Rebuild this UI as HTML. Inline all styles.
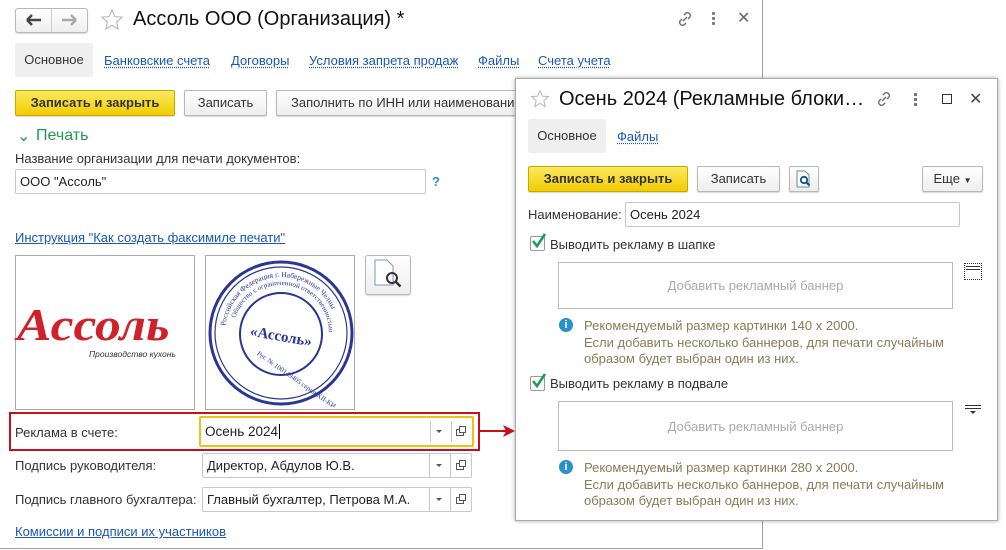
<!DOCTYPE html>
<html><head><meta charset="utf-8"><style>
*{box-sizing:border-box;margin:0;padding:0}
body{width:1006px;height:550px;background:#fff;position:relative;overflow:hidden;font-family:"Liberation Sans","Noto Sans CJK SC",sans-serif;font-size:13px;color:#333}
.a{position:absolute;white-space:nowrap}
.lnk{color:#1a56b8;text-decoration:underline dotted;text-underline-offset:2px}
.ul{color:#1a56b8;text-decoration:underline}
.btn{position:absolute;border:1px solid #b8b8b8;border-radius:2px;background:linear-gradient(#fff,#eee);box-shadow:0 1px 1px rgba(0,0,0,.15);text-align:center;color:#333}
.yb{background:linear-gradient(#fbe960,#f2cd00);border-color:#c9a800;font-weight:bold;color:#333}
.inp{position:absolute;border:1px solid #c8c8c8;border-radius:2px;background:#fff;padding-left:4px}
.dd{position:absolute;top:0;bottom:0;border-left:1px solid #c8c8c8;width:21px}
.tab{position:absolute;background:#efefef;border-radius:3px;text-align:center}
.info{position:absolute;width:14px;height:14px;border-radius:50%;background:#2b8fd0;color:#fff;font-size:11px;font-weight:bold;text-align:center;line-height:14px}
.note{color:#8b7b56;line-height:16.5px}
.cb{position:absolute;width:15px;height:15px;border:1px solid #999;border-radius:2px;background:#fff}
</style></head><body>
<div class="a" style="left:0;top:0;width:763px;height:549px;border-right:1px solid #a0a0a0;border-bottom:1px solid #a0a0a0"></div>
<div class="btn" style="left:15px;top:8px;width:73px;height:25px;border-radius:3px"></div>
<div class="a" style="left:51px;top:9px;width:1px;height:23px;background:#ccc"></div>
<svg class="a" style="left:26px;top:14px" width="16" height="12"><path d="M1 6h14M1 6l5-5M1 6l5 5" stroke="#444" stroke-width="2.4" fill="none"/></svg>
<svg class="a" style="left:61px;top:14px" width="16" height="12"><path d="M15 6H1M15 6l-5-5M15 6l-5 5" stroke="#aaa" stroke-width="2.4" fill="none"/></svg>
<svg class="a" style="left:100px;top:8px" width="24" height="24" viewBox="0 0 24 24"><path d="M12 2l2.9 6.6 7.1.6-5.4 4.7 1.6 7-6.2-3.7-6.2 3.7 1.6-7L2 9.2l7.1-.6z" fill="none" stroke="#bbb" stroke-width="1.2"/></svg>
<div class="a" style="left:133px;top:8px;font-size:20px;color:#111">Ассоль ООО (Организация) *</div>
<svg class="a" style="left:676px;top:10px" width="18" height="18" viewBox="0 0 18 18"><path d="M7 11l4-4M8 5l2-2a3 3 0 014 4l-2 2M10 13l-2 2a3 3 0 01-4-4l2-2" fill="none" stroke="#666" stroke-width="1.3"/></svg>
<div class="a" style="left:712px;top:12px;width:3px;height:3px;background:#777;box-shadow:0 5px #777,0 10px #777;border-radius:1px"></div>
<div class="a" style="left:737px;top:8px;font-size:16px;color:#666">✕</div>
<div class="tab" style="left:15px;top:43px;width:78px;height:34px;line-height:34px">Основное</div>
<div class="a lnk" style="left:104px;top:53px">Банковские счета</div>
<div class="a lnk" style="left:231px;top:53px">Договоры</div>
<div class="a lnk" style="left:309px;top:53px">Условия запрета продаж</div>
<div class="a lnk" style="left:478px;top:53px">Файлы</div>
<div class="a lnk" style="left:538px;top:53px">Счета учета</div>
<div class="btn yb" style="left:15px;top:90px;width:160px;height:26px;line-height:24px">Записать и закрыть</div>
<div class="btn" style="left:184px;top:90px;width:83px;height:26px;line-height:24px">Записать</div>
<div class="btn" style="left:276px;top:90px;width:260px;height:26px;line-height:24px;text-align:left;padding-left:14px">Заполнить по ИНН или наименованию</div>
<div class="a" style="left:17px;top:126px;font-size:16px;color:#1e9b55">⌄</div>
<div class="a" style="left:36px;top:127px;font-size:16px;color:#1e9b55">Печать</div>
<div class="a" style="left:15px;top:151px">Название организации для печати документов:</div>
<div class="inp" style="left:15px;top:169px;width:411px;height:25px;line-height:23px;color:#222">ООО "Ассоль"</div>
<div class="a" style="left:432px;top:174px;color:#2b8fd0;font-weight:bold">?</div>
<div class="a ul" style="left:15px;top:230px">Инструкция "Как создать факсимиле печати"</div>
<div class="a" style="left:15px;top:255px;width:180px;height:155px;border:1px solid #aaa"></div>
<div class="a" style="left:17px;top:298px;font-family:'Liberation Serif',serif;font-style:italic;font-weight:bold;font-size:46px;color:#d0202a;letter-spacing:0px;transform:scaleX(1.12);transform-origin:left">Ассоль</div>
<div class="a" style="left:89px;top:349px;font-size:8.5px;font-style:italic;color:#333">Производство кухонь</div>
<div class="a" style="left:205px;top:255px;width:150px;height:155px;border:1px solid #aaa"></div>
<svg class="a" style="left:207px;top:259px" width="148" height="148" viewBox="0 0 148 148"><defs><path id="rc" d="M74 74m-56 0a56 56 0 1 1 112 0a56 56 0 1 1 -112 0"/><path id="rc2" d="M74 74m-48 0a48 48 0 1 1 96 0a48 48 0 1 1 -96 0"/></defs><circle cx="74" cy="74" r="71" fill="none" stroke="#2a3594" stroke-width="3"/><circle cx="74" cy="74" r="66" fill="none" stroke="#2a3594" stroke-width="1.2"/><circle cx="74" cy="75" r="41" fill="none" stroke="#2a3594" stroke-width="2"/><text x="74" y="82" text-anchor="middle" font-family="Liberation Serif" font-weight="bold" font-size="15" fill="#2a3594" transform="rotate(10 74 78)">«Ассоль»</text><text font-family="Liberation Serif" font-size="7.5" fill="#2a3594"><textPath href="#rc" startOffset="2%">Российская Федерация     г. Набережные Челны</textPath></text><text font-family="Liberation Serif" font-size="7" fill="#2a3594"><textPath href="#rc2" startOffset="5%">Общество с ограниченной ответственностью</textPath></text><text x="38" y="112" font-family="Liberation Serif" font-size="7" fill="#2a3594" transform="rotate(35 70 122)">Рег. № 100149405 серия XII-КИ</text></svg>
<div class="btn" style="left:365px;top:255px;width:46px;height:40px;border-radius:3px"></div>
<svg class="a" style="left:374px;top:259px" width="32" height="32" viewBox="0 0 32 32"><path d="M1 1h12l6 6v19H1z" fill="#fff" stroke="#7a9ab8"/><circle cx="18" cy="19" r="5" fill="none" stroke="#333" stroke-width="2"/><path d="M21.5 22.5l5 5" stroke="#333" stroke-width="2.5"/></svg>
<div class="a" style="left:9px;top:412px;width:471px;height:39px;border:2px solid #c8101a"></div>
<div class="a" style="left:15px;top:425px">Реклама в счете:</div>
<div class="inp" style="left:199px;top:416px;width:275px;height:31px;border:2px solid #f2c018;line-height:27px;font-size:13.5px;color:#222">Осень 2024<span style="border-left:1px solid #000;margin-left:1px"></span>
<div class="dd" style="right:21px;top:3px;bottom:3px"></div><div class="dd" style="right:0;top:3px;bottom:3px"></div></div>
<div class="a" style="left:15px;top:458px">Подпись руководителя:</div>
<div class="inp" style="left:202px;top:453px;width:270px;height:25px;line-height:23px;color:#222">Директор, Абдулов Ю.В.<div class="dd" style="right:21px"></div><div class="dd" style="right:0"></div></div>
<div class="a" style="left:15px;top:492px">Подпись главного бухгалтера:</div>
<div class="inp" style="left:202px;top:487px;width:270px;height:25px;line-height:23px;color:#222">Главный бухгалтер, Петрова М.А.<div class="dd" style="right:21px"></div><div class="dd" style="right:0"></div></div>
<svg class="a" style="left:430px;top:420px" width="40" height="100" viewBox="0 0 40 100"><g fill="#555"><path d="M6 10h6l-3 3z"/><path d="M6 44h6l-3 3z"/><path d="M6 78h6l-3 3z"/></g><g fill="none" stroke="#555"><rect x="26.5" y="9.5" width="7" height="6"/><rect x="29.5" y="6.5" width="6" height="6" fill="#fff"/><rect x="26.5" y="43.5" width="7" height="6"/><rect x="29.5" y="40.5" width="6" height="6" fill="#fff"/><rect x="26.5" y="77.5" width="7" height="6"/><rect x="29.5" y="74.5" width="6" height="6" fill="#fff"/></g></svg>
<div class="a ul" style="left:15px;top:524px">Комиссии и подписи их участников</div>
<div class="a" style="left:480px;top:430px;width:26px;height:2px;background:#c8101a"></div>
<svg class="a" style="left:503px;top:425px" width="12" height="12"><path d="M0 0l12 6-12 6 3-6z" fill="#c8101a"/></svg>
<div class="a" style="left:515px;top:78px;width:483px;height:443px;background:#fff;border:1px solid #aaa;box-shadow:0 0 4px rgba(0,0,0,.35)"></div>
<svg class="a" style="left:530px;top:89px" width="20" height="20" viewBox="0 0 24 24"><path d="M12 2l2.9 6.6 7.1.6-5.4 4.7 1.6 7-6.2-3.7-6.2 3.7 1.6-7L2 9.2l7.1-.6z" fill="none" stroke="#bbb" stroke-width="1.3"/></svg>
<div class="a" style="left:559px;top:88px;font-size:20px;color:#111">Осень 2024 (Рекламные блоки…</div>
<svg class="a" style="left:875px;top:90px" width="18" height="18" viewBox="0 0 18 18"><path d="M7 11l4-4M8 5l2-2a3 3 0 014 4l-2 2M10 13l-2 2a3 3 0 01-4-4l2-2" fill="none" stroke="#666" stroke-width="1.3"/></svg>
<div class="a" style="left:914px;top:93px;width:3px;height:3px;background:#777;box-shadow:0 5px #777,0 10px #777"></div>
<div class="a" style="left:942px;top:94px;width:10px;height:10px;border:1.5px solid #333"></div>
<div class="a" style="left:969px;top:89px;font-size:16px;color:#444">✕</div>
<div class="tab" style="left:528px;top:119px;width:78px;height:34px;line-height:34px">Основное</div>
<div class="a lnk" style="left:617px;top:129px">Файлы</div>
<div class="btn yb" style="left:528px;top:166px;width:160px;height:26px;line-height:24px">Записать и закрыть</div>
<div class="btn" style="left:697px;top:166px;width:83px;height:26px;line-height:24px">Записать</div>
<div class="btn" style="left:789px;top:166px;width:30px;height:26px"></div>
<svg class="a" style="left:796px;top:170px" width="17" height="18" viewBox="0 0 17 18"><path d="M1 1h8l4 4v12H1z" fill="#fff" stroke="#6a8aa8"/><circle cx="8" cy="10" r="3.2" fill="none" stroke="#1a4f8a" stroke-width="1.8"/><path d="M10.5 12.5l3 3" stroke="#1a4f8a" stroke-width="2"/></svg>
<div class="btn" style="left:922px;top:166px;width:61px;height:26px;line-height:24px">Еще <span style="font-size:8px">▼</span></div>
<div class="a" style="left:528px;top:207px">Наименование:</div>
<div class="inp" style="left:625px;top:202px;width:335px;height:25px;line-height:23px;color:#222">Осень 2024</div>
<div class="cb" style="left:530px;top:236px"></div>
<svg class="a" style="left:530px;top:232px" width="18" height="18"><path d="M3 9l4 5 8-12" fill="none" stroke="#1e9b55" stroke-width="2.6"/></svg>
<div class="a" style="left:550px;top:237px">Выводить рекламу в шапке</div>
<div class="a" style="left:558px;top:262px;width:395px;height:47px;border:1px solid #bbb;text-align:center;line-height:45px;color:#aaa">Добавить рекламный баннер</div>
<div class="a" style="left:964px;top:263px;width:18px;height:17px;border:1px dotted #333"></div>
<div class="a" style="left:966px;top:266px;width:14px;height:1px;background:#333;box-shadow:0 3px #333"></div>
<div class="info" style="left:559px;top:318px">i</div>
<div class="a note" style="left:584px;top:318px">Рекомендуемый размер картинки 140 x 2000.<br>Если добавить несколько баннеров, для печати случайным<br>образом будет выбран один из них.</div>
<div class="cb" style="left:530px;top:376px"></div>
<svg class="a" style="left:530px;top:372px" width="18" height="18"><path d="M3 9l4 5 8-12" fill="none" stroke="#1e9b55" stroke-width="2.6"/></svg>
<div class="a" style="left:550px;top:376px">Выводить рекламу в подвале</div>
<div class="a" style="left:558px;top:401px;width:395px;height:50px;border:1px solid #bbb;text-align:center;line-height:50px;color:#aaa">Добавить рекламный баннер</div>
<div class="a" style="left:965px;top:405px;width:16px;height:1px;background:#333;box-shadow:0 3px #333"></div>
<svg class="a" style="left:970px;top:411px" width="6" height="4"><path d="M0 0h6l-3 3z" fill="#333"/></svg>
<div class="info" style="left:559px;top:460px">i</div>
<div class="a note" style="left:584px;top:460px">Рекомендуемый размер картинки 280 x 2000.<br>Если добавить несколько баннеров, для печати случайным<br>образом будет выбран один из них.</div>
</body></html>
